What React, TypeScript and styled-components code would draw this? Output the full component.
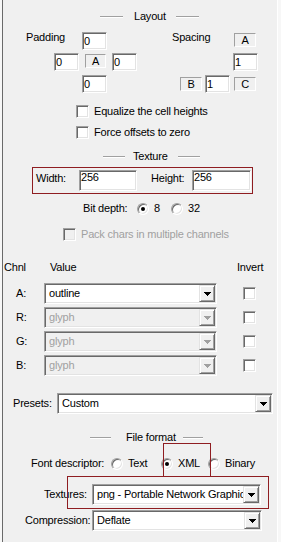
import React from "react";
import styled, { createGlobalStyle, css } from "styled-components";

const GlobalStyle = createGlobalStyle`
  html, body { margin: 0; padding: 0; background: #f7f7f7; }
  body {
    font-family: "Liberation Sans", Arial, sans-serif;
    font-size: 11px;
    letter-spacing: -0.2px;
    color: #000;
  }
  * { box-sizing: border-box; }
`;

const sunken = css`
  border: 1px solid;
  border-color: #a0a0a0 #ffffff #ffffff #a0a0a0;
  box-shadow: inset 1px 1px 0 #696969, inset -1px -1px 0 #e3e3e3;
`;

const Panel = styled.div`
  position: relative;
  margin-left: 2px;
  width: 276px;
  height: 542px;
  background: #f0f0f0;
  border-left: 1px solid #6a6a6a;
  border-right: 1px solid #ffffff;
  padding-top: 10px;
  display: flex;
  flex-direction: column;
  overflow: hidden;
`;

const GroupHeader = styled.div<{ $mt: number; $x: number }>`
  display: flex;
  align-items: center;
  flex-shrink: 0;
  height: 13px;
  margin-top: ${(p) => p.$mt}px;
  padding-left: ${(p) => p.$x - 3}px;
`;

const Etch = styled.span<{ $w: number }>`
  display: block;
  width: ${(p) => p.$w}px;
  height: 2px;
  border-top: 1px solid #a0a0a0;
  border-bottom: 1px solid #ffffff;
  flex-shrink: 0;
`;

const HeaderTitle = styled.span<{ $g1: number; $g2: number }>`
  margin-left: ${(p) => p.$g1}px;
  margin-right: ${(p) => p.$g2}px;
  line-height: 13px;
  white-space: nowrap;
`;

const Row = styled.div<{ $mt: number; $pl?: number; $h?: number; $top?: boolean }>`
  display: flex;
  align-items: ${(p) => (p.$top ? "flex-start" : "center")};
  flex-shrink: 0;
  height: ${(p) => p.$h ?? 13}px;
  margin-top: ${(p) => p.$mt}px;
  padding-left: ${(p) => p.$pl ?? 0}px;
`;

const Label = styled.span<{ $w?: number; $ml?: number; $mt?: number; $disabled?: boolean }>`
  display: inline-block;
  flex-shrink: 0;
  width: ${(p) => (p.$w ? `${p.$w}px` : "auto")};
  margin-left: ${(p) => p.$ml ?? 0}px;
  margin-top: ${(p) => p.$mt ?? 0}px;
  line-height: 13px;
  white-space: nowrap;
  color: ${(p) => (p.$disabled ? "#a0a0a0" : "#000")};
`;

const Edit = styled.div<{ $w: number; $h?: number; $ml?: number; $top?: boolean }>`
  ${sunken}
  display: flex;
  align-items: ${(p) => (p.$top ? "flex-start" : "center")};
  flex-shrink: 0;
  width: ${(p) => p.$w}px;
  height: ${(p) => p.$h ?? 18}px;
  margin-left: ${(p) => p.$ml ?? 0}px;
  padding-left: 1px;
  background: #ffffff;
  line-height: 13px;
`;

const StaticBox = styled.div<{ $w: number; $ml?: number; $mt?: number }>`
  display: flex;
  align-items: center;
  justify-content: center;
  flex-shrink: 0;
  width: ${(p) => p.$w}px;
  height: 14px;
  margin-left: ${(p) => p.$ml ?? 0}px;
  margin-top: ${(p) => p.$mt ?? 0}px;
  border: 1px solid;
  border-color: #a0a0a0 #ffffff #ffffff #a0a0a0;
  line-height: 12px;
`;

const Check = styled.span<{ $disabled?: boolean; $ml?: number }>`
  ${sunken}
  display: block;
  flex-shrink: 0;
  width: 13px;
  height: 13px;
  margin-left: ${(p) => p.$ml ?? 0}px;
  background: ${(p) => (p.$disabled ? "#f0f0f0" : "#ffffff")};
`;

const CheckRow = styled(Row)`
  gap: 5px;
`;

const Radio = styled.span<{ $checked?: boolean }>`
  ${sunken}
  position: relative;
  display: block;
  flex-shrink: 0;
  width: 12px;
  height: 12px;
  border-radius: 50%;
  background: #ffffff;
  &::after {
    content: "";
    display: ${(p) => (p.$checked ? "block" : "none")};
    position: absolute;
    left: 3px;
    top: 3px;
    width: 4px;
    height: 4px;
    border-radius: 50%;
    background: #000;
  }
`;

const RadioOption = styled.label<{ $w?: number }>`
  display: flex;
  align-items: center;
  gap: 5px;
  flex-shrink: 0;
  width: ${(p) => (p.$w ? `${p.$w}px` : "auto")};
  line-height: 13px;
  white-space: nowrap;
`;

const RedBox = styled.div`
  display: flex;
  align-items: flex-start;
  flex-shrink: 0;
  width: 221px;
  height: 27px;
  margin-top: 4px;
  margin-left: 29px;
  padding: 2px 0 0 3px;
  border: 1px solid #8f1d21;
`;

const ComboBox = styled.div<{ $w: number; $ml?: number; $disabled?: boolean }>`
  ${sunken}
  display: flex;
  align-items: stretch;
  flex-shrink: 0;
  width: ${(p) => p.$w}px;
  height: 21px;
  margin-left: ${(p) => p.$ml ?? 0}px;
  padding: 1px;
  background: ${(p) => (p.$disabled ? "#f0f0f0" : "#ffffff")};
`;

const ComboText = styled.span<{ $disabled?: boolean }>`
  flex: 1;
  min-width: 0;
  padding-left: 3px;
  line-height: 17px;
  white-space: nowrap;
  overflow: hidden;
  color: ${(p) => (p.$disabled ? "#a0a0a0" : "#000")};
`;

const DropButton = styled.span<{ $disabled?: boolean }>`
  display: flex;
  align-items: center;
  justify-content: center;
  flex-shrink: 0;
  width: 16px;
  background: #f0f0f0;
  border: 1px solid;
  border-color: #e3e3e3 #696969 #696969 #e3e3e3;
  box-shadow: inset 1px 1px 0 #ffffff, inset -1px -1px 0 #a0a0a0;
  color: ${(p) => (p.$disabled ? "#a0a0a0" : "#000")};
`;

const Highlight = styled.div<{ $x: number; $y: number; $w: number; $h: number }>`
  position: absolute;
  left: ${(p) => p.$x - 3}px;
  top: ${(p) => p.$y}px;
  width: ${(p) => p.$w}px;
  height: ${(p) => p.$h}px;
  border: 1px solid #8f1d21;
  pointer-events: none;
`;

const Arrow = () => (
  <svg width="7" height="4" viewBox="0 0 7 4" shapeRendering="crispEdges">
    <path d="M0 0h7v1H0zM1 1h5v1H1zM2 2h3v1H2zM3 3h1v1H3z" fill="currentColor" />
  </svg>
);

const Combo: React.FC<{ w: number; ml?: number; disabled?: boolean; value: string }> = ({
  w,
  ml,
  disabled,
  value,
}) => (
  <ComboBox $w={w} $ml={ml} $disabled={disabled}>
    <ComboText $disabled={disabled}>{value}</ComboText>
    <DropButton $disabled={disabled}>
      <Arrow />
    </DropButton>
  </ComboBox>
);

const channels = [
  { ch: "A:", value: "outline", disabled: false },
  { ch: "R:", value: "glyph", disabled: true },
  { ch: "G:", value: "glyph", disabled: true },
  { ch: "B:", value: "glyph", disabled: true },
];

export default function App() {
  return (
    <>
      <GlobalStyle />
      <Panel>
        <GroupHeader $mt={0} $x={100}>
          <Etch $w={23} />
          <HeaderTitle $g1={11} $g2={10}>Layout</HeaderTitle>
          <Etch $w={23} />
        </GroupHeader>

        <Row $mt={9} $h={18} $top>
          <Label $ml={23} $w={56} $mt={-1}>Padding</Label>
          <Edit $w={25}>0</Edit>
          <Label $ml={65} $w={62} $mt={-1}>Spacing</Label>
          <StaticBox $w={22} $mt={1}>A</StaticBox>
        </Row>
        <Row $mt={3} $h={18} $top>
          <Edit $w={25} $ml={51}>0</Edit>
          <StaticBox $w={21} $ml={6} $mt={1}>A</StaticBox>
          <Edit $w={25} $ml={6}>0</Edit>
          <Edit $w={25} $ml={96}>1</Edit>
        </Row>
        <Row $mt={4} $h={18} $top>
          <Edit $w={25} $ml={79}>0</Edit>
          <StaticBox $w={22} $ml={73} $mt={2}>B</StaticBox>
          <Edit $w={25} $ml={3}>1</Edit>
          <StaticBox $w={22} $ml={4} $mt={2}>C</StaticBox>
        </Row>

        <CheckRow $mt={12} $pl={73}>
          <Check />
          <Label>Equalize the cell heights</Label>
        </CheckRow>
        <CheckRow $mt={8} $pl={73}>
          <Check />
          <Label>Force offsets to zero</Label>
        </CheckRow>

        <GroupHeader $mt={11} $x={103}>
          <Etch $w={22} />
          <HeaderTitle $g1={8} $g2={10}>Texture</HeaderTitle>
          <Etch $w={22} />
        </GroupHeader>

        <RedBox>
          <Label $w={43} $mt={2}>Width:</Label>
          <Edit $w={58} $h={21} $top>256</Edit>
          <Label $w={41} $ml={14} $mt={2}>Height:</Label>
          <Edit $w={59} $h={21} $top>256</Edit>
        </RedBox>

        <Row $mt={8} $pl={80}>
          <Label $w={54}>Bit depth:</Label>
          <RadioOption $w={34}>
            <Radio $checked />
            8
          </RadioOption>
          <RadioOption>
            <Radio />
            32
          </RadioOption>
        </Row>

        <CheckRow $mt={13} $pl={60}>
          <Check $disabled />
          <Label $disabled>Pack chars in multiple channels</Label>
        </CheckRow>

        <Row $mt={20} $pl={1}>
          <Label $w={46}>Chnl</Label>
          <Label $w={187}>Value</Label>
          <Label>Invert</Label>
        </Row>

        {channels.map((c, i) => (
          <Row key={c.ch} $mt={i === 0 ? 9 : 3} $pl={13} $h={21}>
            <Label $w={28}>{c.ch}</Label>
            <Combo w={173} value={c.value} disabled={c.disabled} />
            <Check $ml={26} />
          </Row>
        ))}

        <Row $mt={17} $pl={10} $h={21}>
          <Label $w={44}>Presets:</Label>
          <Combo w={216} value="Custom" />
        </Row>

        <GroupHeader $mt={17} $x={90}>
          <Etch $w={21} />
          <HeaderTitle $g1={15} $g2={7}>File format</HeaderTitle>
          <Etch $w={20} />
        </GroupHeader>

        <Row $mt={13} $pl={28}>
          <Label $w={80}>Font descriptor:</Label>
          <RadioOption $w={50}>
            <Radio />
            Text
          </RadioOption>
          <RadioOption $w={47}>
            <Radio $checked />
            XML
          </RadioOption>
          <RadioOption>
            <Radio />
            Binary
          </RadioOption>
        </Row>

        <Row $mt={14} $pl={41} $h={21}>
          <Label $w={48}>Textures:</Label>
          <Combo w={169} value="png - Portable Network Graphics" />
        </Row>
        <Row $mt={5} $pl={22} $h={21}>
          <Label $w={67}>Compression:</Label>
          <Combo w={170} value="Deflate" />
        </Row>

        <Highlight $x={163} $y={443} $w={48} $h={34} />
        <Highlight $x={67} $y={476} $w={202} $h={33} />
      </Panel>
    </>
  );
}
